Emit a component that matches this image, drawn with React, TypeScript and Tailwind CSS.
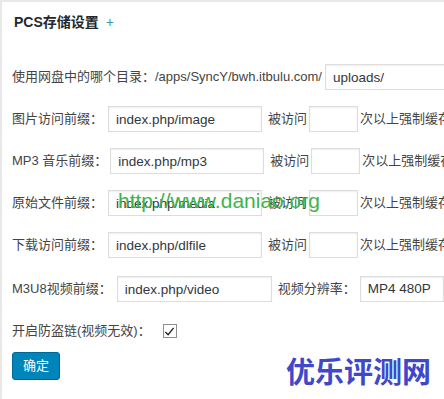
import React from 'react';

const font = { fontFamily: '"Liberation Sans", "Noto Sans CJK SC", sans-serif' };

const inputCls =
  'h-[26px] border border-[#dddddd] bg-white px-[7px] text-[13.5px] text-[#32373c] outline-none shadow-[inset_0_1px_2px_rgba(0,0,0,0.07)]';

function PrefixRow({ label, value, gap = 'ml-[5px]' }: { label: string; value: string; gap?: string }) {
  return (
    <div className="flex h-[42px] items-center whitespace-nowrap">
      <span>{label}</span>
      <input readOnly value={value} className={`${inputCls} ${gap} w-[154px]`} />
      <span className="ml-[6px]">被访问</span>
      <input readOnly value="" className={`${inputCls} ml-[2px] w-[49px]`} />
      <span className="ml-[2px]">次以上强制缓存</span>
    </div>
  );
}

export default function App() {
  return (
    <div
      className="relative h-[399px] w-[444px] overflow-hidden border-l-2 border-t-2 border-[#e8e8e8] bg-white text-[13px] text-[#444444]"
      style={font}
    >
      <div className="flex h-[40px] items-center pl-[12px]">
        <span className="text-[14px] font-semibold text-[#23282d]">PCS存储设置</span>
        <span className="ml-[7px] text-[14px] text-[#2e9fb8]">+</span>
      </div>

      <div className="pl-[10px] pt-[14px]">
        <div className="flex h-[42px] items-center whitespace-nowrap">
          <span>使用网盘中的哪个目录：/apps/SyncY/bwh.itbulu.com/</span>
          <input readOnly value="uploads/" className={`${inputCls} ml-[3px] w-[160px]`} />
        </div>
        <PrefixRow label="图片访问前缀：" value="index.php/image" />
        <PrefixRow label="MP3 音乐前缀：" value="index.php/mp3" gap="ml-[3px]" />
        <PrefixRow label="原始文件前缀：" value="index.php/media" />
        <PrefixRow label="下载访问前缀：" value="index.php/dlfile" />
        <div className="flex h-[46px] items-center whitespace-nowrap">
          <span>M3U8视频前缀：</span>
          <input readOnly value="index.php/video" className={`${inputCls} ml-[5px] w-[155px]`} />
          <span className="ml-[6px]">视频分辨率：</span>
          <div className={`${inputCls} ml-[4px] flex w-[100px] items-center`}>MP4 480P</div>
        </div>
        <div className="flex h-[38px] items-center whitespace-nowrap">
          <span>开启防盗链(视频无效)：</span>
          <span className="ml-[12px] flex h-[14px] w-[14px] items-center justify-center border border-[#8c8f94] bg-white">
            <svg width="11" height="11" viewBox="0 0 12 12" fill="none">
              <path d="M1.5 6.5 L4.5 9.5 L10.5 2" stroke="#1e1e1e" strokeWidth="1.4" />
            </svg>
          </span>
        </div>
        <div className="pt-[2px]">
          <button className="h-[28px] w-[48px] rounded-[3px] border border-[#006799] bg-[#0085ba] text-[13px] text-white">
            确定
          </button>
        </div>
      </div>

      <div
        className="absolute left-[116px] top-[183px] text-[21px] text-[#3db54a]"
        style={{ fontFamily: '"Liberation Sans", Arial, sans-serif' }}
      >
        http://www.daniao.org
      </div>
      <div
        className="absolute left-[284px] top-[347px] text-[29px] font-bold text-[#3e48c8]"
        style={{ fontFamily: '"Noto Sans CJK SC", sans-serif' }}
      >
        优乐评测网
      </div>
    </div>
  );
}
